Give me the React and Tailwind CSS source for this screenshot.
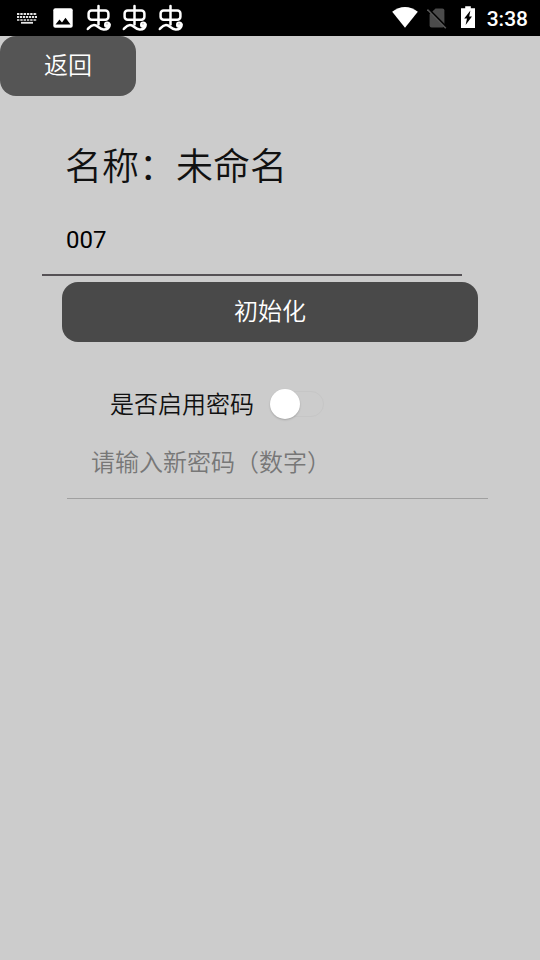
import React, { useState } from "react";

function KeyboardIcon() {
  return (
    <svg width="22" height="12" viewBox="0 0 22 12" fill="none" stroke="#e4e4e4" aria-hidden="true">
      <path d="M1 2H21" strokeWidth="2" strokeDasharray="2.4 0.9" />
      <path d="M1 5H21" strokeWidth="2" strokeDasharray="2.2 0.8" />
      <path d="M1 8H21" strokeWidth="1.6" strokeDasharray="2.4 0.9" />
      <path d="M5 10.8H17" strokeWidth="1.8" />
    </svg>
  );
}

function PictureIcon() {
  return (
    <svg width="20" height="20" viewBox="0 0 20 20" aria-hidden="true">
      <rect x="0.3" y="0.3" width="19.4" height="19.4" rx="2" fill="#fff" />
      <path d="M2.5 16.5 L6.5 11.5 L9 14.5 L12.5 9.8 L17.5 16.5 Z" fill="#000" />
    </svg>
  );
}

function WormIcon() {
  return (
    <svg width="26" height="28" viewBox="0 0 26 28" fill="none" stroke="#fff" strokeWidth="2.5" strokeLinecap="round" strokeLinejoin="round" aria-hidden="true">
      <rect x="2.6" y="6.4" width="19.8" height="9.4" rx="3" />
      <path d="M12.5 2V20.6" />
      <path d="M1.8 25C4 22.6 5 21 8 21C12 21 12.6 25.2 17.6 25.6C21.4 25.8 23.8 23.6 23.6 20.4" />
      <circle cx="21.2" cy="20.8" r="3.2" fill="#fff" stroke="none" />
      <circle cx="21" cy="19.8" r="0.6" fill="#777" stroke="none" />
    </svg>
  );
}

function WifiIcon() {
  return (
    <svg width="26" height="21" viewBox="0 0 26 21" fill="#fff" aria-hidden="true">
      <path d="M13 20.8 L0.2 4.8 C4 1.9 8.4 0.1 13 0.1 S22 1.9 25.8 4.8 Z" />
    </svg>
  );
}

function NoSimIcon() {
  return (
    <svg width="20" height="21" viewBox="0 0 20 21" aria-hidden="true">
      <path d="M8.5 0.6H15.4Q17.4 0.6 17.4 2.6V17.6Q17.4 19.6 15.4 19.6H4.6Q2.6 19.6 2.6 17.6V6.2Z" fill="#4b4b4b" />
      <path d="M1.4 1 L20 19.8" stroke="#000" strokeWidth="2.2" />
      <path d="M0.4 1.6 L18.8 20.2" stroke="#555" strokeWidth="1.6" />
    </svg>
  );
}

function BatteryIcon() {
  return (
    <svg width="14" height="22" viewBox="0 0 14 22" aria-hidden="true">
      <path d="M4.2 0.2H9.8V2.2H14V22H0V2.2H4.2Z" fill="#fff" />
      <path d="M9.4 4.6 L3.2 12.4 H6 L4.6 19 L11 10.6 H8.2 Z" fill="#000" />
    </svg>
  );
}

function StatusBar() {
  return (
    <header className="flex h-9 items-center justify-between bg-black pr-3 pl-4 text-white">
      <div className="flex items-center">
        <KeyboardIcon />
        <span className="ml-[15px]"><PictureIcon /></span>
        <div className="ml-[13px] flex gap-[10px]">
          <WormIcon />
          <WormIcon />
          <WormIcon />
        </div>
      </div>
      <div className="flex items-center">
        <span className="pb-0.5"><WifiIcon /></span>
        <span className="ml-[9px]"><NoSimIcon /></span>
        <span className="ml-[14px] pb-0.5"><BatteryIcon /></span>
        <time className="ml-3 pt-0.5 font-[Roboto,sans-serif] text-[21px] leading-6 font-medium">3:38</time>
      </div>
    </header>
  );
}

export default function App() {
  const [name, setName] = useState("007");
  const [locked, setLocked] = useState(false);
  const [password, setPassword] = useState("");

  return (
    <div className="min-h-screen bg-[#cccccc] font-[Roboto,'Noto_Sans_CJK_SC',sans-serif] text-2xl font-[350] text-[#111111]">
      <StatusBar />
      <main className="flex flex-col">
        <button type="button" className="h-15 w-[136px] rounded-2xl bg-[#555555] text-white">返回</button>

        <label htmlFor="name" className="mt-11 ml-[65px] text-[37px] leading-[56px]">名称：未命名</label>
        <input
          id="name"
          type="text"
          value={name}
          onChange={(e) => setName(e.target.value)}
          className="mt-2 mr-[78px] ml-[42px] h-[72px] border-b-2 border-[#555155] bg-transparent px-6 pt-0.5 font-normal text-black outline-none"
        />
        <button type="button" className="mx-[62px] mt-[6px] h-15 rounded-2xl bg-[#494949] text-white">初始化</button>

        <div className="mt-[43px] ml-[110px] flex items-center gap-4">
          <label htmlFor="lock" className="pt-0.5 leading-9">是否启用密码</label>
          <span className="relative flex h-9 w-14 items-center">
            <input
              id="lock"
              type="checkbox"
              role="switch"
              checked={locked}
              onChange={(e) => setLocked(e.target.checked)}
              className="peer ml-1 h-[26px] w-[50px] appearance-none rounded-full border border-[#c6c6c6] checked:bg-[#777777]"
            />
            <span className="pointer-events-none absolute left-0 size-[30px] rounded-full bg-white shadow-[0_1px_2px_rgba(0,0,0,0.2)] peer-checked:left-[26px]" />
          </span>
        </div>

        <input
          type="text"
          inputMode="numeric"
          aria-label="请输入新密码（数字）"
          placeholder="请输入新密码（数字）"
          value={password}
          onChange={(e) => setPassword(e.target.value)}
          className="mt-[3px] mr-[52px] ml-[67px] h-[73px] border-b border-[#a0a0a0] bg-transparent px-6 pt-0.5 outline-none placeholder:text-[#777777]"
        />
      </main>
    </div>
  );
}
